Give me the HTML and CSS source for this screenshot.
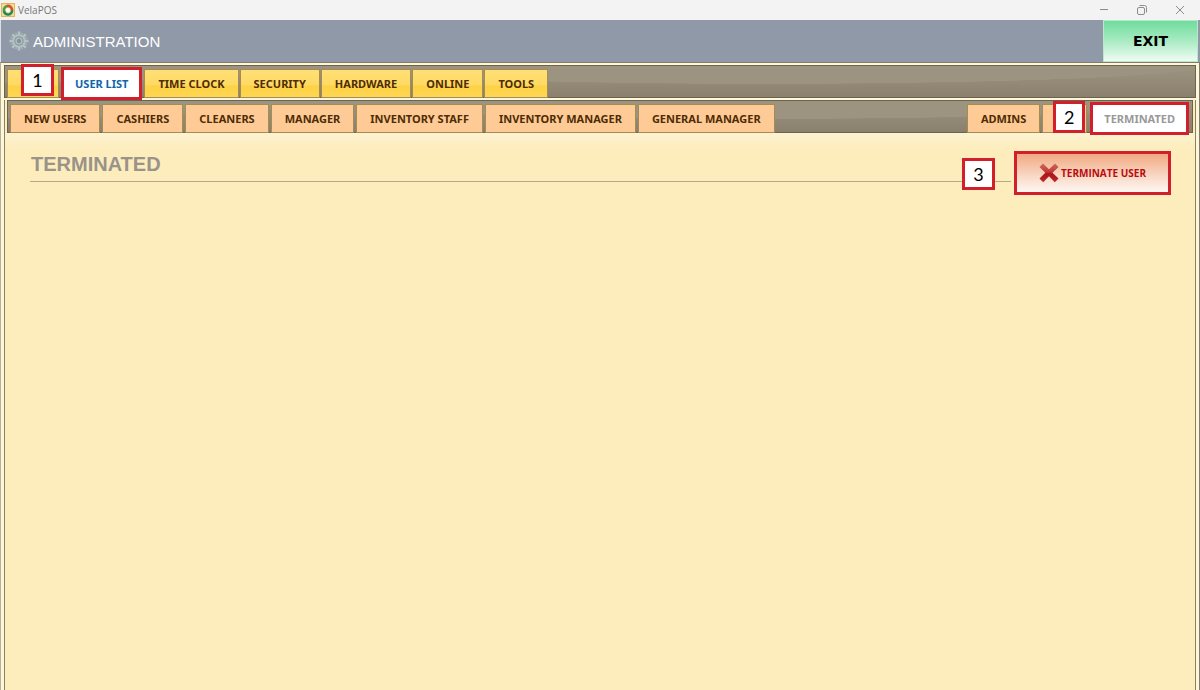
FILE: index.html
```html
<!DOCTYPE html>
<html lang="en">
<head>
<meta charset="utf-8">
<title>VelaPOS</title>
<link rel="stylesheet" href="styles.css">
</head>
<body>
<div class="titlebar">
  <svg class="app-icon" width="14" height="14" viewBox="0 0 14 14" aria-hidden="true">
    <rect x="0.5" y="0.5" width="13" height="13" fill="#f4dc96" stroke="#e3b45c"/>
    <path d="M3 8A4 4 0 0 1 7 3" fill="none" stroke="#4d9b50" stroke-width="2.6"/>
    <path d="M6 3A4 4 0 0 1 11 7" fill="none" stroke="#d9502c" stroke-width="2.6"/>
    <path d="M11 7A4 4 0 0 1 3 8" fill="none" stroke="#24885a" stroke-width="2.6"/>
    <circle cx="7" cy="7" r="2" fill="#fff"/>
  </svg>
  <span class="app-name">VelaPOS</span>
  <div class="window-buttons">
    <button class="window-button" aria-label="Minimize"><svg width="10" height="10" viewBox="0 0 10 10"><path d="M1 4.5H9"/></svg></button>
    <button class="window-button" aria-label="Restore"><svg width="10" height="10" viewBox="0 0 10 10"><rect x="0.5" y="2.5" width="7" height="7" rx="1.5"/><path d="M2.5 .5H7.5Q9.5.5 9.5 2.5V7.5"/></svg></button>
    <button class="window-button" aria-label="Close"><svg width="10" height="10" viewBox="0 0 10 10"><path d="M1 1L9 9M9 1L1 9"/></svg></button>
  </div>
</div>
<header class="header">
  <svg class="gear" width="20" height="20" viewBox="0 0 20 20" aria-hidden="true">
    <g stroke="#b4c3c2" stroke-width="2.6">
      <path d="M10 .5V19.5M.5 10H19.5M3.3 3.3L16.7 16.7M16.7 3.3L3.3 16.7"/>
    </g>
    <g stroke="#a5b4b6" stroke-width="1.4">
      <path d="M6.6 1.7L13.4 18.3M13.4 1.7L6.6 18.3M1.7 6.6L18.3 13.4M1.7 13.4L18.3 6.6"/>
    </g>
    <circle cx="10" cy="10" r="6.6" fill="#b4c3c2"/>
    <circle cx="10" cy="10" r="4.8" fill="#8b9aa1"/>
    <circle cx="10" cy="10" r="3.6" fill="#b0bfbf"/>
    <circle cx="10" cy="10" r="2.2" fill="#85929b"/>
  </svg>
  <h1 class="header-title">ADMINISTRATION</h1>
  <button class="exit">EXIT</button>
</header>
<main class="frame">
  <nav class="bar bar-main">
    <div class="slot">
      <button class="tab tab-first">I</button>
      <span class="callout callout-one">1</span>
    </div>
    <button class="tab tab-current">USER LIST</button>
    <button class="tab">TIME CLOCK</button>
    <button class="tab">SECURITY</button>
    <button class="tab">HARDWARE</button>
    <button class="tab">ONLINE</button>
    <button class="tab">TOOLS</button>
  </nav>
  <section class="panel">
    <nav class="bar bar-sub">
      <button class="tab">NEW USERS</button>
      <button class="tab">CASHIERS</button>
      <button class="tab">CLEANERS</button>
      <button class="tab">MANAGER</button>
      <button class="tab">INVENTORY STAFF</button>
      <button class="tab">INVENTORY MANAGER</button>
      <button class="tab">GENERAL MANAGER</button>
      <button class="tab tab-right">ADMINS</button>
      <div class="slot">
        <button class="tab tab-covered" aria-label="Users"></button>
        <span class="callout callout-two">2</span>
      </div>
      <button class="tab tab-current tab-muted">TERMINATED</button>
    </nav>
    <div class="content">
      <div class="heading">
        <h2 class="heading-title">TERMINATED</h2>
        <span class="callout callout-three">3</span>
      </div>
      <button class="terminate">
        <svg width="20" height="20" viewBox="0 0 20 20" aria-hidden="true">
          <defs><linearGradient id="cross" x2="0" y2="1"><stop offset="0" stop-color="#d06a5c"/><stop offset=".45" stop-color="#bd3a36"/><stop offset=".55" stop-color="#ac1518"/><stop offset="1" stop-color="#bc2828"/></linearGradient></defs>
          <path fill="url(#cross)" d="M4 .5L10 6.2L16 .5L19.5 4L13.5 9.8L19.5 15.5L15.8 19.3L10 13.3L4.2 19.3L.5 15.5L6.3 9.8L.5 4Z"/>
        </svg>
        TERMINATE USER
      </button>
    </div>
  </section>
</main>
</body>
</html>
```
FILE: styles.css
```css
* { box-sizing: border-box; }
body {
  margin: 0;
  min-height: 100vh;
  display: flex;
  flex-direction: column;
  font-family: "Noto Sans", "Open Sans", sans-serif;
  background: #9099a8;
}
button { border: 0; padding: 0; background: none; font: inherit; white-space: nowrap; }
h1, h2 { margin: 0; }
.titlebar {
  display: flex;
  align-items: center;
  height: 20px;
  padding: 0 1px;
  background: #f3f3f3;
}
.app-name {
  margin-left: 3px;
  font: 10px/14px "Open Sans", sans-serif;
  color: #777;
}
.window-buttons { display: flex; margin-left: auto; }
.window-button {
  display: flex;
  align-items: center;
  justify-content: center;
  width: 38px;
  height: 18px;
}
.window-button svg { fill: none; stroke: #8c8c8c; }
.header {
  display: flex;
  align-items: center;
  height: 42px;
  padding: 0 2px 0 9px;
  background: #9099a8;
  box-shadow: inset 1px 0 #dde0e4;
}
.header-title {
  margin-left: 4px;
  font: 15px "Liberation Sans", Arial, sans-serif;
  color: #fff;
}
.exit {
  align-self: stretch;
  width: 95px;
  margin-left: auto;
  border: 1px solid #b9e8cb;
  background: linear-gradient(#6fdd9c, #a9ebc3 50%, #f0fcf4);
  color: #000;
  font: bold 14px "DejaVu Sans", Verdana, sans-serif;
}
.frame {
  flex: 1;
  display: flex;
  flex-direction: column;
  padding: 2px 3px 0;
  background: #fff7da;
  border: solid #827c6c;
  border-width: 1px 1px 0;
  border-left-color: #b5b09a;
}
.bar {
  display: flex;
  align-items: flex-end;
  border: 1px solid #6c634c;
  background:
    radial-gradient(ellipse 440px 18px at 50% 0, #9c9380 98%, transparent) 320px 0 / 880px 100%,
    linear-gradient(#9d9481, #8a806d);
}
.bar-main { gap: 3px; height: 33px; padding: 0 3px; }
.bar-sub { gap: 4px; height: 33px; margin: 0 2px; padding: 0 3px; }
.tab {
  flex: none;
  height: 27px;
  padding: 0 13px;
  color: #4e2c04;
  font-size: 11px;
  font-weight: bold;
  line-height: 26px;
  box-shadow: 0 0 0 1px #a58d52;
}
.bar-main .tab { background: linear-gradient(#ffdf77, #ffda62 55%, #fdd244 60%, #ffd655); }
.bar-sub .tab { background: #fecb96; }
.slot { position: relative; flex: none; }
.slot .tab { display: block; }
.bar-main .tab-first { width: 50px; text-align: left; color: #b03818; }
.tab-covered { width: 43px; }
.bar .tab-current {
  position: relative;
  height: 33px;
  margin-bottom: -3px;
  padding: 0 11px;
  border: 3px solid #d1202c;
  background: #fff;
  box-shadow: none;
  color: #0d65ad;
  line-height: 26px;
}
.bar .tab-muted { color: #999; }
.bar .tab-right { margin-left: auto; }
.callout {
  position: absolute;
  display: flex;
  align-items: center;
  justify-content: center;
  width: 33px;
  height: 32px;
  border: 3px solid #d1202c;
  background: #fff;
  color: #000;
  font: 18px/22px Lato, sans-serif;
}
.callout-one { left: 13px; bottom: 1px; }
.callout-two { left: 10px; bottom: -1px; width: 32px; }
.callout-three { right: 16px; top: 7px; }
.panel {
  flex: 1;
  margin-top: 2px;
  border: solid #8c815f;
  border-width: 0 1px;
  background: #fdedbd;
}
.bar-main + .panel { box-shadow: 0 -1px #fff7da; }
.content {
  display: flex;
  align-items: flex-start;
  gap: 3px;
  padding: 18px 24px 0 25px;
  background: linear-gradient(#fdf3d2, #fdedbd 16px);
}
.heading {
  position: relative;
  flex: 1;
  height: 31px;
  border-bottom: 1px solid #b3a887;
}
.heading-title {
  padding: 1px;
  font: bold 20px/24px "Liberation Sans", Arial, sans-serif;
  color: #999389;
}
.terminate {
  display: flex;
  align-items: center;
  justify-content: center;
  gap: 2px;
  width: 157px;
  height: 44px;
  border: 3px solid #d1202c;
  background: linear-gradient(#f1a981, #f9dac8 60%, #fff7f2);
  color: #b80c10;
  font: bold 10px "Open Sans", sans-serif;
}
```
